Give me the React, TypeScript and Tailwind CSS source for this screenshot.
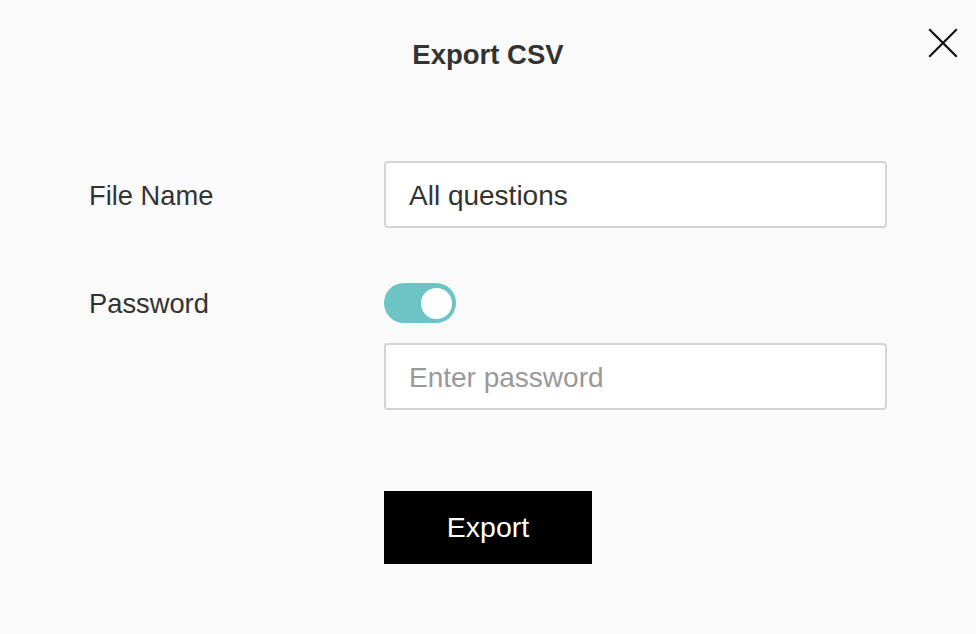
import React from "react";

export default function App() {
  return (
    <div
      className="relative w-[976px] h-[634px] bg-[#fafafa] text-[#333]"
      style={{ fontFamily: '"Liberation Sans", Arial, Helvetica, sans-serif' }}
    >
      <button className="absolute right-[18px] top-[28px] w-[30px] h-[30px] flex items-center justify-center" aria-label="Close">
        <svg width="30" height="30" viewBox="0 0 30 30" fill="none" stroke="#111" strokeWidth="2.2" strokeLinecap="square">
          <path d="M2 2 L28 28 M28 2 L2 28" />
        </svg>
      </button>
      <div className="pt-[39px] flex justify-center">
        <h1 className="text-[27.5px] leading-[32px] font-bold text-[#333]">Export CSV</h1>
      </div>
      <div className="pl-[89px] pt-[90px] flex flex-col">
        <div className="flex items-center h-[67px]">
          <div className="w-[295px] pt-[3px] text-[27.3px]">File Name</div>
          <div className="w-[503px] h-[67px] bg-white border-2 border-[#d4d4d4] rounded-[4px] flex items-center pl-[23px] pt-[3px] text-[28px] text-[#333]">
            All questions
          </div>
        </div>
        <div className="flex items-center h-[40px] mt-[55px]">
          <div className="w-[295px] pt-[2px] text-[27.3px]">Password</div>
          <div className="w-[72px] h-[40px] rounded-full bg-[#6cc4c4] flex items-center justify-end pr-[4px]">
            <div className="w-[31px] h-[31px] rounded-full bg-white" />
          </div>
        </div>
        <div className="flex mt-[20px]">
          <div className="w-[295px]" />
          <div className="w-[503px] h-[67px] bg-white border-2 border-[#d4d4d4] rounded-[4px] flex items-center pl-[23px] pt-[3px] text-[28px] text-[#999]">
            Enter password
          </div>
        </div>
        <div className="flex mt-[81px]">
          <div className="w-[295px]" />
          <button className="w-[208px] h-[73px] bg-black text-white text-[28.5px] flex items-center justify-center">
            Export
          </button>
        </div>
      </div>
    </div>
  );
}
